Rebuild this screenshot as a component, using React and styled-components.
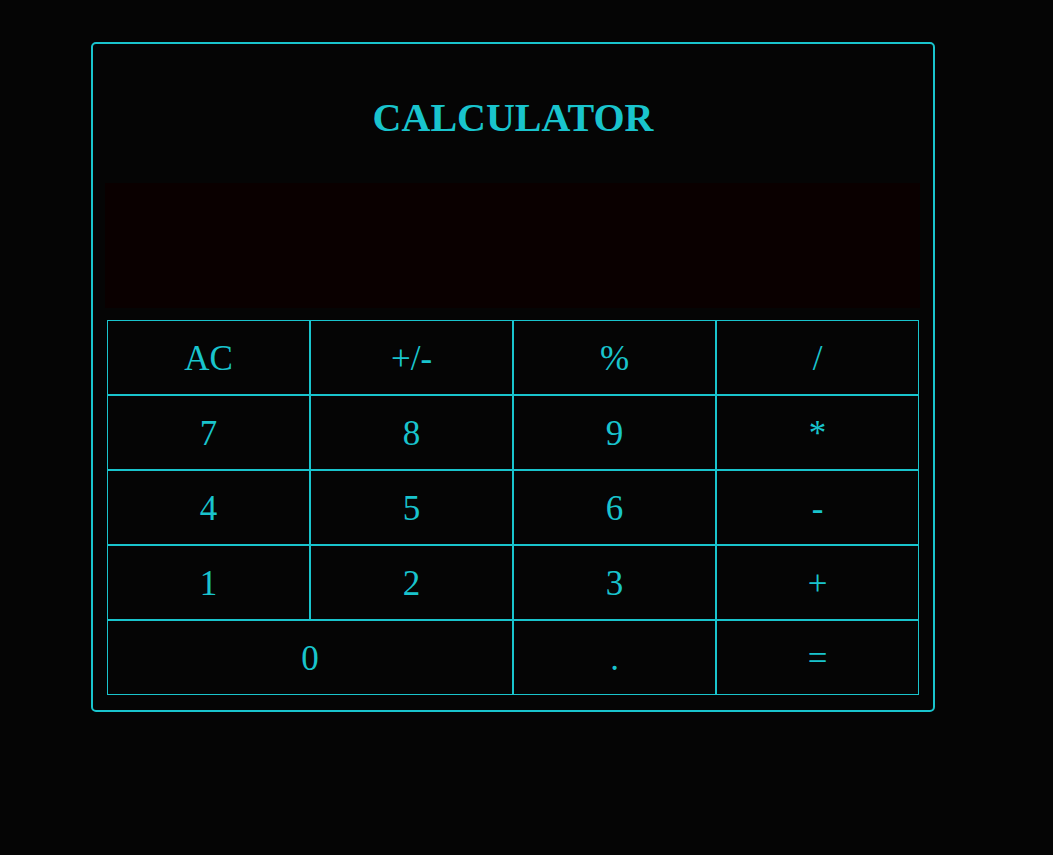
import React from "react";
import styled, { createGlobalStyle } from "styled-components";

const CYAN = "#19c4cd";

const Global = createGlobalStyle`
  html, body {
    margin: 0;
    padding: 0;
    background: #050505;
    font-family: "Liberation Serif", "Times New Roman", serif;
  }
`;

const Page = styled.div`
  min-height: 855px;
  padding: 42px 0 0 91px;
  box-sizing: border-box;
`;

const Card = styled.div`
  width: 844px;
  box-sizing: border-box;
  border: 2px solid ${CYAN};
  border-radius: 5px;
  padding: 0 14px 15px;
  display: flex;
  flex-direction: column;
`;

const Title = styled.h1`
  margin: 51px 0 42px;
  font-size: 40px;
  line-height: 46px;
  font-weight: bold;
  text-align: center;
  color: ${CYAN};
`;

const Display = styled.div`
  height: 125px;
  margin: 0 -1px 12px -2px;
  background: #0a0000;
  color: ${CYAN};
  font-size: 40px;
  display: flex;
  align-items: center;
  justify-content: flex-end;
  padding: 0 16px;
  box-sizing: border-box;
`;

const Keypad = styled.div`
  display: grid;
  grid-template-columns: repeat(4, 203px);
  grid-auto-rows: 75px;
`;

const Key = styled.button`
  grid-column: span ${(p) => p.$span || 1};
  background: transparent;
  border: 1px solid ${CYAN};
  border-radius: 0;
  margin: 0;
  padding: 2px 0 0;
  color: ${CYAN};
  font-family: "Liberation Serif", "Times New Roman", serif;
  font-size: 35px;
  cursor: pointer;
  display: flex;
  align-items: center;
  justify-content: center;
`;

const keys = [
  ["AC"], ["+/-"], ["%"], ["/"],
  ["7"], ["8"], ["9"], ["*"],
  ["4"], ["5"], ["6"], ["-"],
  ["1"], ["2"], ["3"], ["+"],
  ["0", 2], ["."], ["="],
];

export default function App() {
  return (
    <>
      <Global />
      <Page>
        <Card>
          <Title>CALCULATOR</Title>
          <Display />
          <Keypad>
            {keys.map(([label, span]) => (
              <Key key={label} $span={span}>
                {label}
              </Key>
            ))}
          </Keypad>
        </Card>
      </Page>
    </>
  );
}
